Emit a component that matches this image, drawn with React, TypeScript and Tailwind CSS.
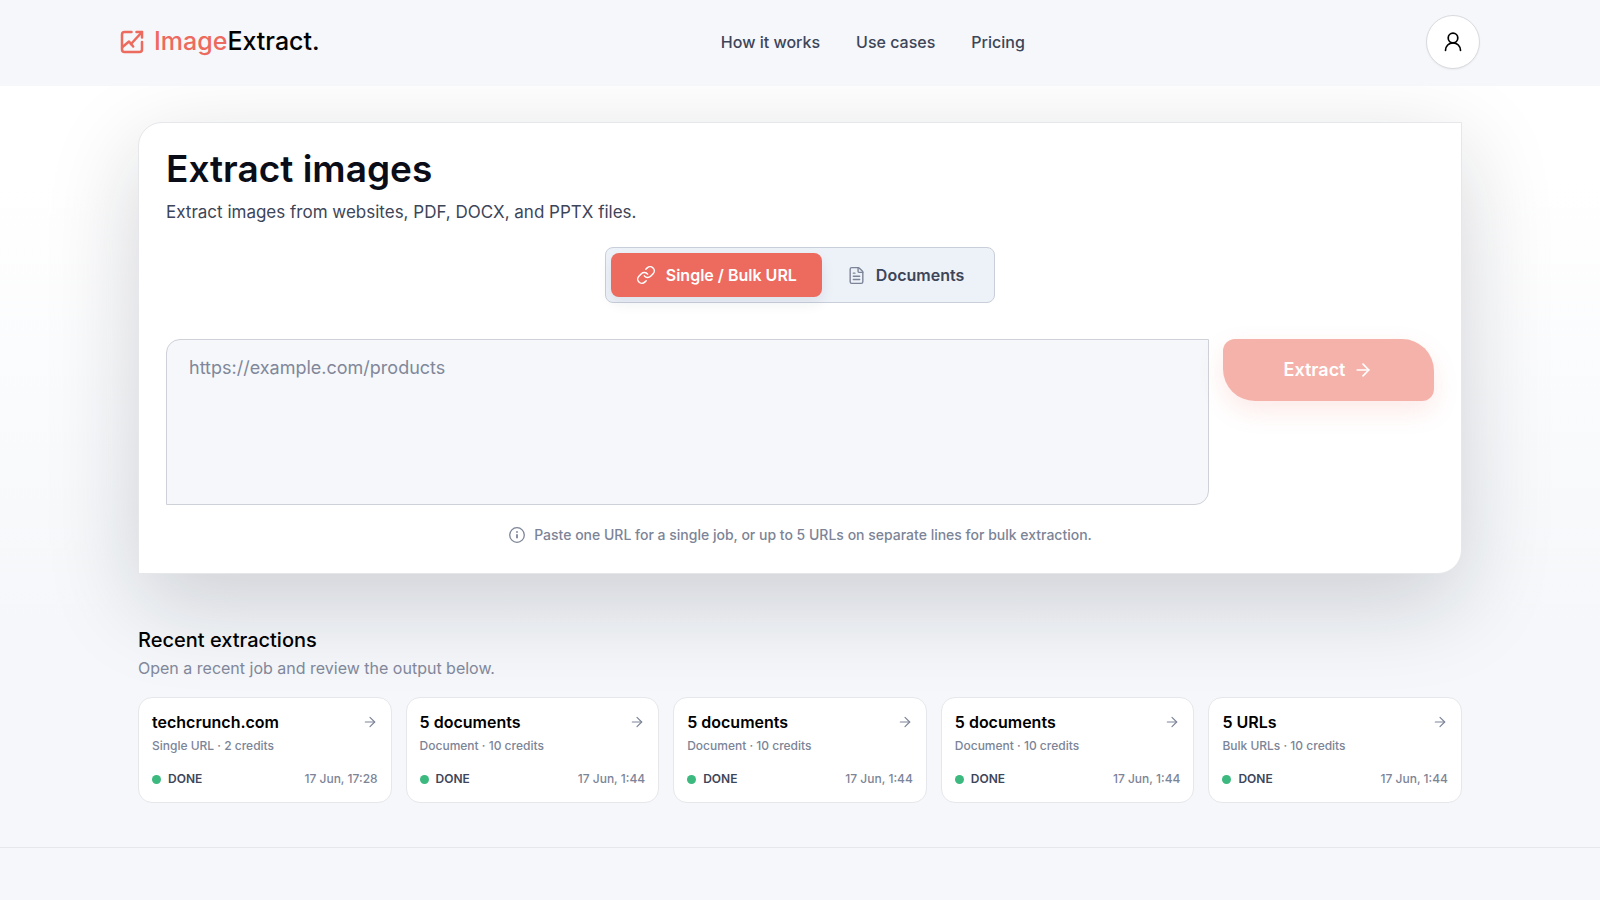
import { ArrowRight, FileText, Link } from "lucide-react";

interface Extraction {
  title: string;
  meta: string;
  date: string;
}

const navLinks = ["How it works", "Use cases", "Pricing"];

const extractions: Extraction[] = [
  { title: "techcrunch.com", meta: "Single URL · 2 credits", date: "17 Jun, 17:28" },
  { title: "5 documents", meta: "Document · 10 credits", date: "17 Jun, 1:44" },
  { title: "5 documents", meta: "Document · 10 credits", date: "17 Jun, 1:44" },
  { title: "5 documents", meta: "Document · 10 credits", date: "17 Jun, 1:44" },
  { title: "5 URLs", meta: "Bulk URLs · 10 credits", date: "17 Jun, 1:44" },
];

const LogoIcon = () => (
  <svg
    viewBox="0 0 24 24"
    className="w-6 h-6 text-[#ed6a5e]"
    fill="none"
    stroke="currentColor"
    strokeWidth="2.5"
    strokeLinecap="round"
    strokeLinejoin="round"
    aria-hidden="true"
  >
    <path d="M11.500 2H4.500A2.500 2.500 0 0 0 2 4.500v15A2.500 2.500 0 0 0 4.500 22h15a2.500 2.500 0 0 0 2.500-2.500V12" />
    <path d="M16.500 2H22v5.500" />
    <path d="M22 2 11 14" />
    <path d="M2.500 17 9 11.500l4.200 5" />
  </svg>
);

const UserIcon = () => (
  <svg
    viewBox="0 0 24 24"
    className="w-6 h-6"
    fill="none"
    stroke="currentColor"
    strokeWidth="1.7"
    strokeLinecap="round"
    aria-hidden="true"
  >
    <circle cx="12" cy="8" r="4.800" />
    <path d="M4.500 20.300a7.500 7.500 0 0 1 15 0" />
  </svg>
);

const InfoIcon = () => (
  <svg viewBox="0 0 18 18" className="w-[18px] h-[18px]" fill="none" stroke="currentColor" aria-hidden="true">
    <circle cx="9" cy="9" r="7.300" strokeWidth="1.300" />
    <path d="M9 8.300v4" strokeWidth="1.800" />
    <path d="M9 5.300v1.500" strokeWidth="1.800" />
  </svg>
);

const Header = () => (
  <header className="relative z-10 bg-[#f5f7fa]">
    <div className="max-w-[1360px] mx-auto h-[86px] pb-0.5 flex items-center justify-between">
      <a href="#" className="flex items-center gap-2.5 text-[25px] font-medium text-black">
        <LogoIcon />
        <span>
          <span className="text-[#ed6a5e]">Image</span>Extract.
        </span>
      </a>
      <nav className="flex items-center gap-9">
        {navLinks.map((label) => (
          <a key={label} href="#" className="text-base font-medium text-[#3d4559]">
            {label}
          </a>
        ))}
      </nav>
      <button
        type="button"
        aria-label="Account"
        className="w-[54px] h-[54px] rounded-full border border-[#d9dade] bg-white shadow-xs flex items-center justify-center text-black"
      >
        <UserIcon />
      </button>
    </div>
  </header>
);

const ExtractPanel = () => (
  <section className="bg-white border border-[#e6e7ea] rounded-tl-3xl rounded-br-3xl px-[27px] pt-[23px] pb-7 shadow-[0_28px_92px_rgba(18,22,38,0.18)]">
    <h1 className="text-[37px] leading-[46px] font-semibold text-[#0a0d18]">Extract images</h1>
    <p className="mt-2 text-[17px] leading-6 text-[#3d4559]">
      Extract images from websites, PDF, DOCX, and PPTX files.
    </p>

    <div className="mt-[23px] flex justify-center">
      <div className="flex rounded-lg border border-[#c9cfda] bg-[#edf1f8] p-[5px]">
        <button
          type="button"
          className="h-11 px-[25px] flex items-center gap-[10px] rounded-lg bg-[#ed6a5e] text-base font-semibold text-white shadow-[0_6px_14px_rgba(30,40,70,0.08)]"
        >
          <Link size={20} strokeWidth={1.75} />
          Single / Bulk URL
        </button>
        <button
          type="button"
          className="h-11 px-[25px] flex items-center gap-[10px] rounded-lg text-base font-semibold text-[#3d4559]"
        >
          <FileText size={19} strokeWidth={1.75} className="text-[#7c8497]" />
          Documents
        </button>
      </div>
    </div>

    {/* URL input + submit */}
    <form className="mt-9 flex items-start gap-[14px]">
      <textarea
        aria-label="URLs to extract"
        placeholder="https://example.com/products"
        className="block flex-1 h-[166px] resize-none rounded-tl-[14px] rounded-br-[14px] border border-[#cfd1d9] bg-[#f5f7fa] px-[22px] py-[14px] text-lg leading-7 text-[#3d4559] placeholder:text-[#81879a] outline-none"
      />
      <button
        type="button"
        className="w-[211px] h-[62px] flex items-center justify-center gap-2 rounded-tl-xl rounded-tr-[32px] rounded-br-xl rounded-bl-[32px] bg-[#f5b2aa] text-lg font-semibold text-white shadow-[0_10px_26px_rgba(237,106,94,0.14)]"
      >
        Extract
        <ArrowRight size={20} strokeWidth={2} />
      </button>
    </form>

    <p className="mt-5 flex items-center justify-center gap-2 text-sm leading-5 font-medium text-[#7c8497]">
      <InfoIcon />
      Paste one URL for a single job, or up to 5 URLs on separate lines for bulk extraction.
    </p>
  </section>
);

const ExtractionCard = ({ title, meta, date }: Extraction) => (
  <a href="#" className="block rounded-[14px] border border-[#e6e7ea] bg-white px-[13px] pt-3 pb-[13px]">
    <div className="flex items-center justify-between">
      <h3 className="text-base leading-6 font-semibold text-black">{title}</h3>
      <ArrowRight size={16} strokeWidth={1.75} className="text-[#7c8497]" />
    </div>
    <p className="mt-0.5 text-xs leading-5 font-medium text-[#7c8497]">{meta}</p>
    <div className="mt-[13px] flex items-center justify-between text-xs leading-5">
      <span className="flex items-center gap-[7px] font-semibold text-[#3d4559]">
        <span className="w-[9px] h-[9px] rounded-full bg-[#3cb97f]" />
        DONE
      </span>
      <span className="font-medium text-[#7c8497]">{date}</span>
    </div>
  </a>
);

const RecentExtractions = () => (
  <section className="mt-[52px]">
    <h2 className="text-xl leading-7 font-medium text-black">Recent extractions</h2>
    <p className="mt-0.5 text-base leading-6 text-[#81879a]">
      Open a recent job and review the output below.
    </p>
    <div className="mt-[17px] grid grid-cols-5 gap-[14px]">
      {extractions.map((item, i) => (
        <ExtractionCard key={i} {...item} />
      ))}
    </div>
  </section>
);

export default function App() {
  return (
    <div className="min-h-screen flex flex-col bg-linear-to-b from-white from-[20%] to-[#f5f7fa] to-[70%] font-['Inter','Liberation_Sans',sans-serif]">
      <Header />
      <main className="w-full max-w-[1324px] mx-auto pt-9 pb-11">
        <ExtractPanel />
        <RecentExtractions />
      </main>
      <footer className="flex-1 border-t border-[#e6e7ea] bg-[#f5f7fa]" />
    </div>
  );
}
